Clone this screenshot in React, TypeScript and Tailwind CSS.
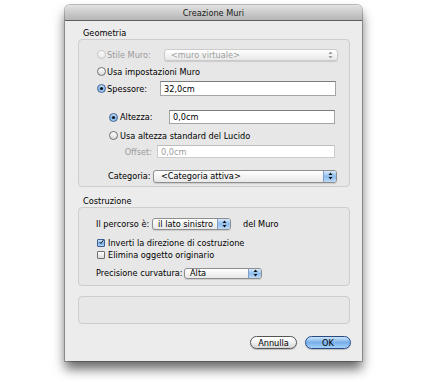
import React from "react";

function Arrows({ light }: { light?: boolean }) {
  const c = light ? "#9a9a9a" : "#111";
  return (
    <svg width="5" height="8" viewBox="0 0 5 8">
      <path d="M0.5 3 L2.5 0.5 L4.5 3 Z" fill={c} />
      <path d="M0.5 5 L2.5 7.5 L4.5 5 Z" fill={c} />
    </svg>
  );
}

function Radio({ checked, disabled }: { checked?: boolean; disabled?: boolean }) {
  return (
    <div
      className={`w-[9px] h-[9px] rounded-full border flex items-center justify-center shrink-0 ${
        checked
          ? "border-[#3d5f92] bg-gradient-to-b from-[#d3e7fb] via-[#7db2e8] to-[#a8d0f6]"
          : disabled
          ? "border-[#c6c6c6] bg-gradient-to-b from-[#fbfbfb] to-[#e8e8e8]"
          : "border-[#6f6f6f] bg-gradient-to-b from-white to-[#d9d9d9]"
      }`}
    >
      {checked && <div className="w-[3px] h-[3px] rounded-full bg-[#111]" />}
    </div>
  );
}

function Check({ checked }: { checked?: boolean }) {
  return (
    <div
      className={`w-[8px] h-[8px] rounded-[1px] border flex items-center justify-center shrink-0 ${
        checked
          ? "border-[#3d5f92] bg-gradient-to-b from-[#d3e7fb] via-[#7db2e8] to-[#a8d0f6]"
          : "border-[#6f6f6f] bg-gradient-to-b from-white to-[#dcdcdc]"
      }`}
    >
      {checked && (
        <svg width="8" height="8" viewBox="0 0 8 8" className="-mt-[2px] ml-[1px]">
          <path d="M1 4 L3 6.5 L7.5 0.5" stroke="#111" strokeWidth="1.4" fill="none" />
        </svg>
      )}
    </div>
  );
}

function Popup({
  text,
  disabled,
  className,
  textPad,
}: {
  text: string;
  disabled?: boolean;
  className: string;
  textPad?: string;
}) {
  return (
    <div
      className={`flex items-center rounded-[3px] border overflow-hidden bg-gradient-to-b from-white to-[#e8e8e8] shadow-[0_1px_1px_rgba(0,0,0,0.12)] ${
        disabled ? "border-[#cbcbcb] text-[#9d9d9d]" : "border-[#8e8e8e] text-black"
      } ${className}`}
    >
      <span className={`flex-1 whitespace-nowrap ${textPad ?? "pl-[7px]"}`}>{text}</span>
      <div
        className={`w-[13px] h-full flex items-center justify-center ${
          disabled
            ? ""
            : "bg-gradient-to-b from-[#d6e9fb] via-[#8ebdee] to-[#bcdaf7] border-l border-[#7e9cc4]"
        }`}
      >
        <Arrows light={disabled} />
      </div>
    </div>
  );
}

function Field({ text, className, disabled }: { text: string; className: string; disabled?: boolean }) {
  return (
    <div
      className={`bg-white border border-[#a5a5a5] border-t-[#7c7c7c] flex items-center pl-[3px] ${
        disabled ? "text-[#a0a0a0] border-[#cdcdcd] border-t-[#bdbdbd]" : "text-black"
      } ${className}`}
    >
      {text}
    </div>
  );
}

export default function App() {
  return (
    <div className="w-[432px] h-[382px] bg-white pl-[65px] pt-[5px] font-['DejaVu_Sans',sans-serif] text-[8.2px] leading-[10px] text-black">
      <div className="w-[297px] h-[356px] flex flex-col bg-[#ececec] rounded-t-[5px] shadow-[0_8px_12px_rgba(0,0,0,0.6)] ring-1 ring-black/25">
        <div className="h-[16px] shrink-0 rounded-t-[5px] border-b border-[#5e5e5e] bg-gradient-to-b from-[#e2e2e2] to-[#b6b6b6] flex items-center justify-center text-[#1a1a1a]">
          Creazione Muri
        </div>
        <div className="flex flex-col pl-[13px] pr-[12px]">
          <div className="mt-[7px] h-[10px] pl-[5px]">Geometria</div>
          <div className="mt-[1px] flex flex-col rounded-[4px] border border-[#cdcdcd] bg-[#e7e7e7] pt-[8px] pb-[3px]">
            <div className="h-[13px] flex items-center pl-[18px]">
              <Radio disabled />
              <span className="w-[57px] ml-[1px] text-[#9b9b9b]">Stile Muro:</span>
              <Popup text="<muro virtuale>" disabled className="w-[174px] h-[12px]" textPad="pl-[6px]" />
            </div>
            <div className="mt-[4px] h-[13px] flex items-center pl-[18px]">
              <Radio />
              <span className="ml-[1px]">Usa impostazioni Muro</span>
            </div>
            <div className="mt-[3px] h-[15px] flex items-center pl-[18px]">
              <Radio checked />
              <span className="w-[53px] ml-[1px]">Spessore:</span>
              <Field text="32,0cm" className="w-[176px] h-[15px]" />
            </div>
            <div className="mt-[14px] h-[14px] flex items-center pl-[30px]">
              <Radio checked />
              <span className="w-[49px] ml-[2px]">Altezza:</span>
              <Field text="0,0cm" className="w-[166px] h-[14px]" />
            </div>
            <div className="mt-[5px] h-[13px] flex items-center pl-[30px]">
              <Radio />
              <span className="ml-[2px]">Usa altezza standard del Lucido</span>
            </div>
            <div className="mt-[3px] h-[13px] flex items-center">
              <span className="w-[73px] text-right text-[#9b9b9b]">Offset:</span>
              <Field text="0,0cm" disabled className="ml-[5px] w-[178px] h-[13px]" />
            </div>
            <div className="mt-[11px] h-[14px] flex items-center pl-[29px]">
              <span className="w-[45px]">Categoria:</span>
              <Popup text="<Categoria attiva>" className="w-[184px] h-[13px]" />
            </div>
          </div>

          <div className="mt-[9px] h-[10px] pl-[5px]">Costruzione</div>
          <div className="mt-[1px] flex flex-col rounded-[4px] border border-[#cdcdcd] bg-[#e7e7e7] pt-[9px] pb-[6px]">
            <div className="h-[13px] flex items-center pl-[17px]">
              <span className="w-[56px]">Il percorso è:</span>
              <Popup text="il lato sinistro" className="w-[79px] h-[12px]" textPad="pl-[5px]" />
              <span className="ml-[12px]">del Muro</span>
            </div>
            <div className="mt-[7px] h-[12px] flex items-center pl-[18px]">
              <Check checked />
              <span className="ml-[3px]">Inverti la direzione di costruzione</span>
            </div>
            <div className="h-[12px] flex items-center pl-[18px]">
              <Check />
              <span className="ml-[3px]">Elimina oggetto originario</span>
            </div>
            <div className="mt-[6px] h-[12px] flex items-center pl-[17px]">
              <span className="w-[88px]">Precisione curvatura:</span>
              <Popup text="Alta" className="w-[78px] h-[11px]" textPad="pl-[5px]" />
            </div>
          </div>

          <div className="mt-[10px] h-[28px] rounded-[4px] border border-[#cdcdcd] bg-[#e7e7e7]" />

          <div className="mt-[12px] flex justify-end gap-[8px] -mr-[1px]">
            <div className="w-[47px] h-[13px] rounded-full border border-[#555] bg-gradient-to-b from-white via-[#f1f1f1] to-[#d6d6d6] flex items-center justify-center shadow-[0_1px_1px_rgba(0,0,0,0.2)]">
              Annulla
            </div>
            <div className="w-[46px] h-[13px] rounded-full border border-[#284a83] bg-gradient-to-b from-[#cde5fc] via-[#78afe8] to-[#a6d0f8] flex items-center justify-center shadow-[0_1px_1px_rgba(0,0,0,0.2)]">
              OK
            </div>
          </div>
        </div>
      </div>
    </div>
  );
}
